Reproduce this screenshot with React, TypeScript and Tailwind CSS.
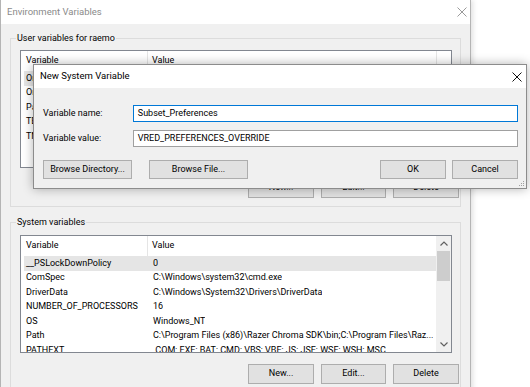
import React from "react";

const userVars = [
  { name: "OneDrive", value: "C:\\Users\\raemo\\OneDrive" },
  { name: "OneDriveConsumer", value: "C:\\Users\\raemo\\OneDrive" },
  { name: "Path", value: "C:\\Users\\raemo\\AppData\\Local\\Microsoft\\WindowsApps;" },
  { name: "TEMP", value: "C:\\Users\\raemo\\AppData\\Local\\Temp" },
  { name: "TMP", value: "C:\\Users\\raemo\\AppData\\Local\\Temp" },
];

const systemVars = [
  { name: "__PSLockDownPolicy", value: "0" },
  { name: "ComSpec", value: "C:\\Windows\\system32\\cmd.exe" },
  { name: "DriverData", value: "C:\\Windows\\System32\\Drivers\\DriverData" },
  { name: "NUMBER_OF_PROCESSORS", value: "16" },
  { name: "OS", value: "Windows_NT" },
  { name: "Path", value: "C:\\Program Files (x86)\\Razer Chroma SDK\\bin;C:\\Program Files\\Raz..." },
  { name: "PATHEXT", value: ".COM;.EXE;.BAT;.CMD;.VBS;.VBE;.JS;.JSE;.WSF;.WSH;.MSC" },
];

function CloseX({ color }: { color: string }) {
  return (
    <svg width="10" height="10" viewBox="0 0 10 10">
      <path d="M0.5 0.5 L9.5 9.5 M9.5 0.5 L0.5 9.5" stroke={color} strokeWidth="1" />
    </svg>
  );
}

function WinButton({ label, className }: { label: string; className: string }) {
  return (
    <div
      className={
        "h-full flex items-center justify-center bg-[#e1e1e1] border border-[#adadad] text-black " +
        className
      }
    >
      {label}
    </div>
  );
}

function VarList({
  rows,
  scroll,
}: {
  rows: { name: string; value: string }[];
  scroll: boolean;
}) {
  return (
    <div className="w-[432px] h-[118px] border border-[#828790] bg-white flex overflow-hidden">
      <div className="flex-1 min-w-0 flex flex-col">
        {/* header */}
        <div className="h-[20px] shrink-0 flex items-center">
          <div className="w-[127px] h-full flex items-center pl-[5px] border-r border-[#e5e5e5]">
            Variable
          </div>
          <div
            className={
              "flex-1 h-full flex items-center pl-[4px] " +
              (scroll ? "" : "border-r border-[#e5e5e5] mr-[14px]")
            }
          >
            Value
          </div>
        </div>
        {rows.map((r, i) => (
          <div
            key={r.name}
            className={
              "h-[14.5px] shrink-0 flex items-center ml-[3px] whitespace-nowrap " +
              (i === 0 ? "bg-[#e5e5e5]" : "")
            }
          >
            <div className="w-[126px] pl-[2px] shrink-0 overflow-hidden">{r.name}</div>
            <div className="pl-[3px] overflow-hidden">{r.value}</div>
          </div>
        ))}
      </div>
      {scroll && (
        <div className="w-[15px] h-full bg-[#f0f0f0] flex flex-col">
          <div className="h-[15px] flex items-center justify-center">
            <svg width="8" height="5" viewBox="0 0 8 5">
              <path d="M0.5 4.5 L4 1 L7.5 4.5" stroke="#606060" strokeWidth="1.2" fill="none" />
            </svg>
          </div>
          <div className="h-[30px] mx-[1px] bg-[#cdcdcd]" />
          <div className="flex-1" />
          <div className="h-[15px] flex items-center justify-center">
            <svg width="8" height="5" viewBox="0 0 8 5">
              <path d="M0.5 0.5 L4 4 L7.5 0.5" stroke="#606060" strokeWidth="1.2" fill="none" />
            </svg>
          </div>
        </div>
      )}
    </div>
  );
}

export default function App() {
  return (
    <div className="relative w-[530px] h-[387px] overflow-hidden bg-white text-[9px] text-black font-['Roboto','Liberation_Sans',sans-serif]">
      {/* Environment Variables window */}
      <div className="absolute left-0 top-0 w-[471px] h-[400px] bg-[#f0f0f0] border-l border-r border-[#b4b4b4] shadow-[2px_0_5px_rgba(0,0,0,0.12)]">
        <div className="h-[24px] bg-white flex items-center justify-between pl-[6px] pr-[3px]">
          <span className="text-[#8a8a8a] text-[9.5px]">Environment Variables</span>
          <CloseX color="#9a9a9a" />
        </div>

        <div className="px-[9px]">
          <fieldset className="mt-[7px] w-[451px] border border-[#dcdcdc] pb-[8px]">
            <legend className="ml-[5px] px-[1px] leading-[14px]">User variables for raemo</legend>
            <div className="pl-[9px] pt-[5px]">
              <VarList rows={userVars} scroll={false} />
              <div className="mt-[10px] h-[20px] flex justify-end gap-[7px] pr-[1px]">
                <WinButton label="New..." className="w-[66px]" />
                <WinButton label="Edit..." className="w-[65px]" />
                <WinButton label="Delete" className="w-[66px]" />
              </div>
            </div>
          </fieldset>

          <fieldset className="mt-[8px] w-[451px] border border-[#dcdcdc] pb-[8px]">
            <legend className="ml-[5px] px-[1px] leading-[14px]">System variables</legend>
            <div className="pl-[9px] pt-[6px]">
              <VarList rows={systemVars} scroll={true} />
              <div className="mt-[11px] h-[20px] flex justify-end gap-[7px] pr-[1px]">
                <WinButton label="New..." className="w-[66px]" />
                <WinButton label="Edit..." className="w-[65px]" />
                <WinButton label="Delete" className="w-[66px]" />
              </div>
            </div>
          </fieldset>
        </div>
      </div>

      {/* New System Variable dialog */}
      <div className="absolute left-[33px] top-[64px] w-[494px] h-[125px] border border-[#8c8c8c] bg-[#f0f0f0] shadow-[0_0_10px_rgba(0,0,0,0.3)] flex flex-col">
        <div className="h-[23px] shrink-0 bg-white flex items-center justify-between pl-[6px] pr-[4px]">
          <span className="text-[9.5px]">New System Variable</span>
          <CloseX color="#111111" />
        </div>
        <div className="relative flex-1 pl-[9px] pr-[8px] pt-[17px]">
          <div className="flex items-center h-[17px]">
            <div className="w-[90px]">Variable name:</div>
            <div className="w-[386px] h-full bg-white border border-[#0078d7] flex items-center pl-[4px]">
              Subset_Preferences
            </div>
          </div>
          <div className="flex items-center h-[17px] mt-[8px]">
            <div className="w-[90px]">Variable value:</div>
            <div className="w-[386px] h-full bg-white border border-[#a0a0a0] flex items-center pl-[4px]">
              VRED_PREFERENCES_OVERRIDE
            </div>
          </div>
          <div className="flex h-[19px] mt-[13px]">
            <WinButton label="Browse Directory..." className="w-[89px]" />
            <WinButton label="Browse File..." className="w-[99px] ml-[17px]" />
            <div className="flex-1" />
            <WinButton label="OK" className="w-[66px]" />
            <WinButton label="Cancel" className="w-[66px] ml-[6px]" />
          </div>
          <svg className="absolute right-[1px] bottom-[1px]" width="6" height="6" viewBox="0 0 6 6">
            <rect x="4" y="0" width="1" height="1" fill="#a0a0a0" />
            <rect x="2" y="2" width="1" height="1" fill="#a0a0a0" />
            <rect x="4" y="2" width="1" height="1" fill="#a0a0a0" />
            <rect x="0" y="4" width="1" height="1" fill="#a0a0a0" />
            <rect x="2" y="4" width="1" height="1" fill="#a0a0a0" />
            <rect x="4" y="4" width="1" height="1" fill="#a0a0a0" />
          </svg>
        </div>
      </div>
    </div>
  );
}
